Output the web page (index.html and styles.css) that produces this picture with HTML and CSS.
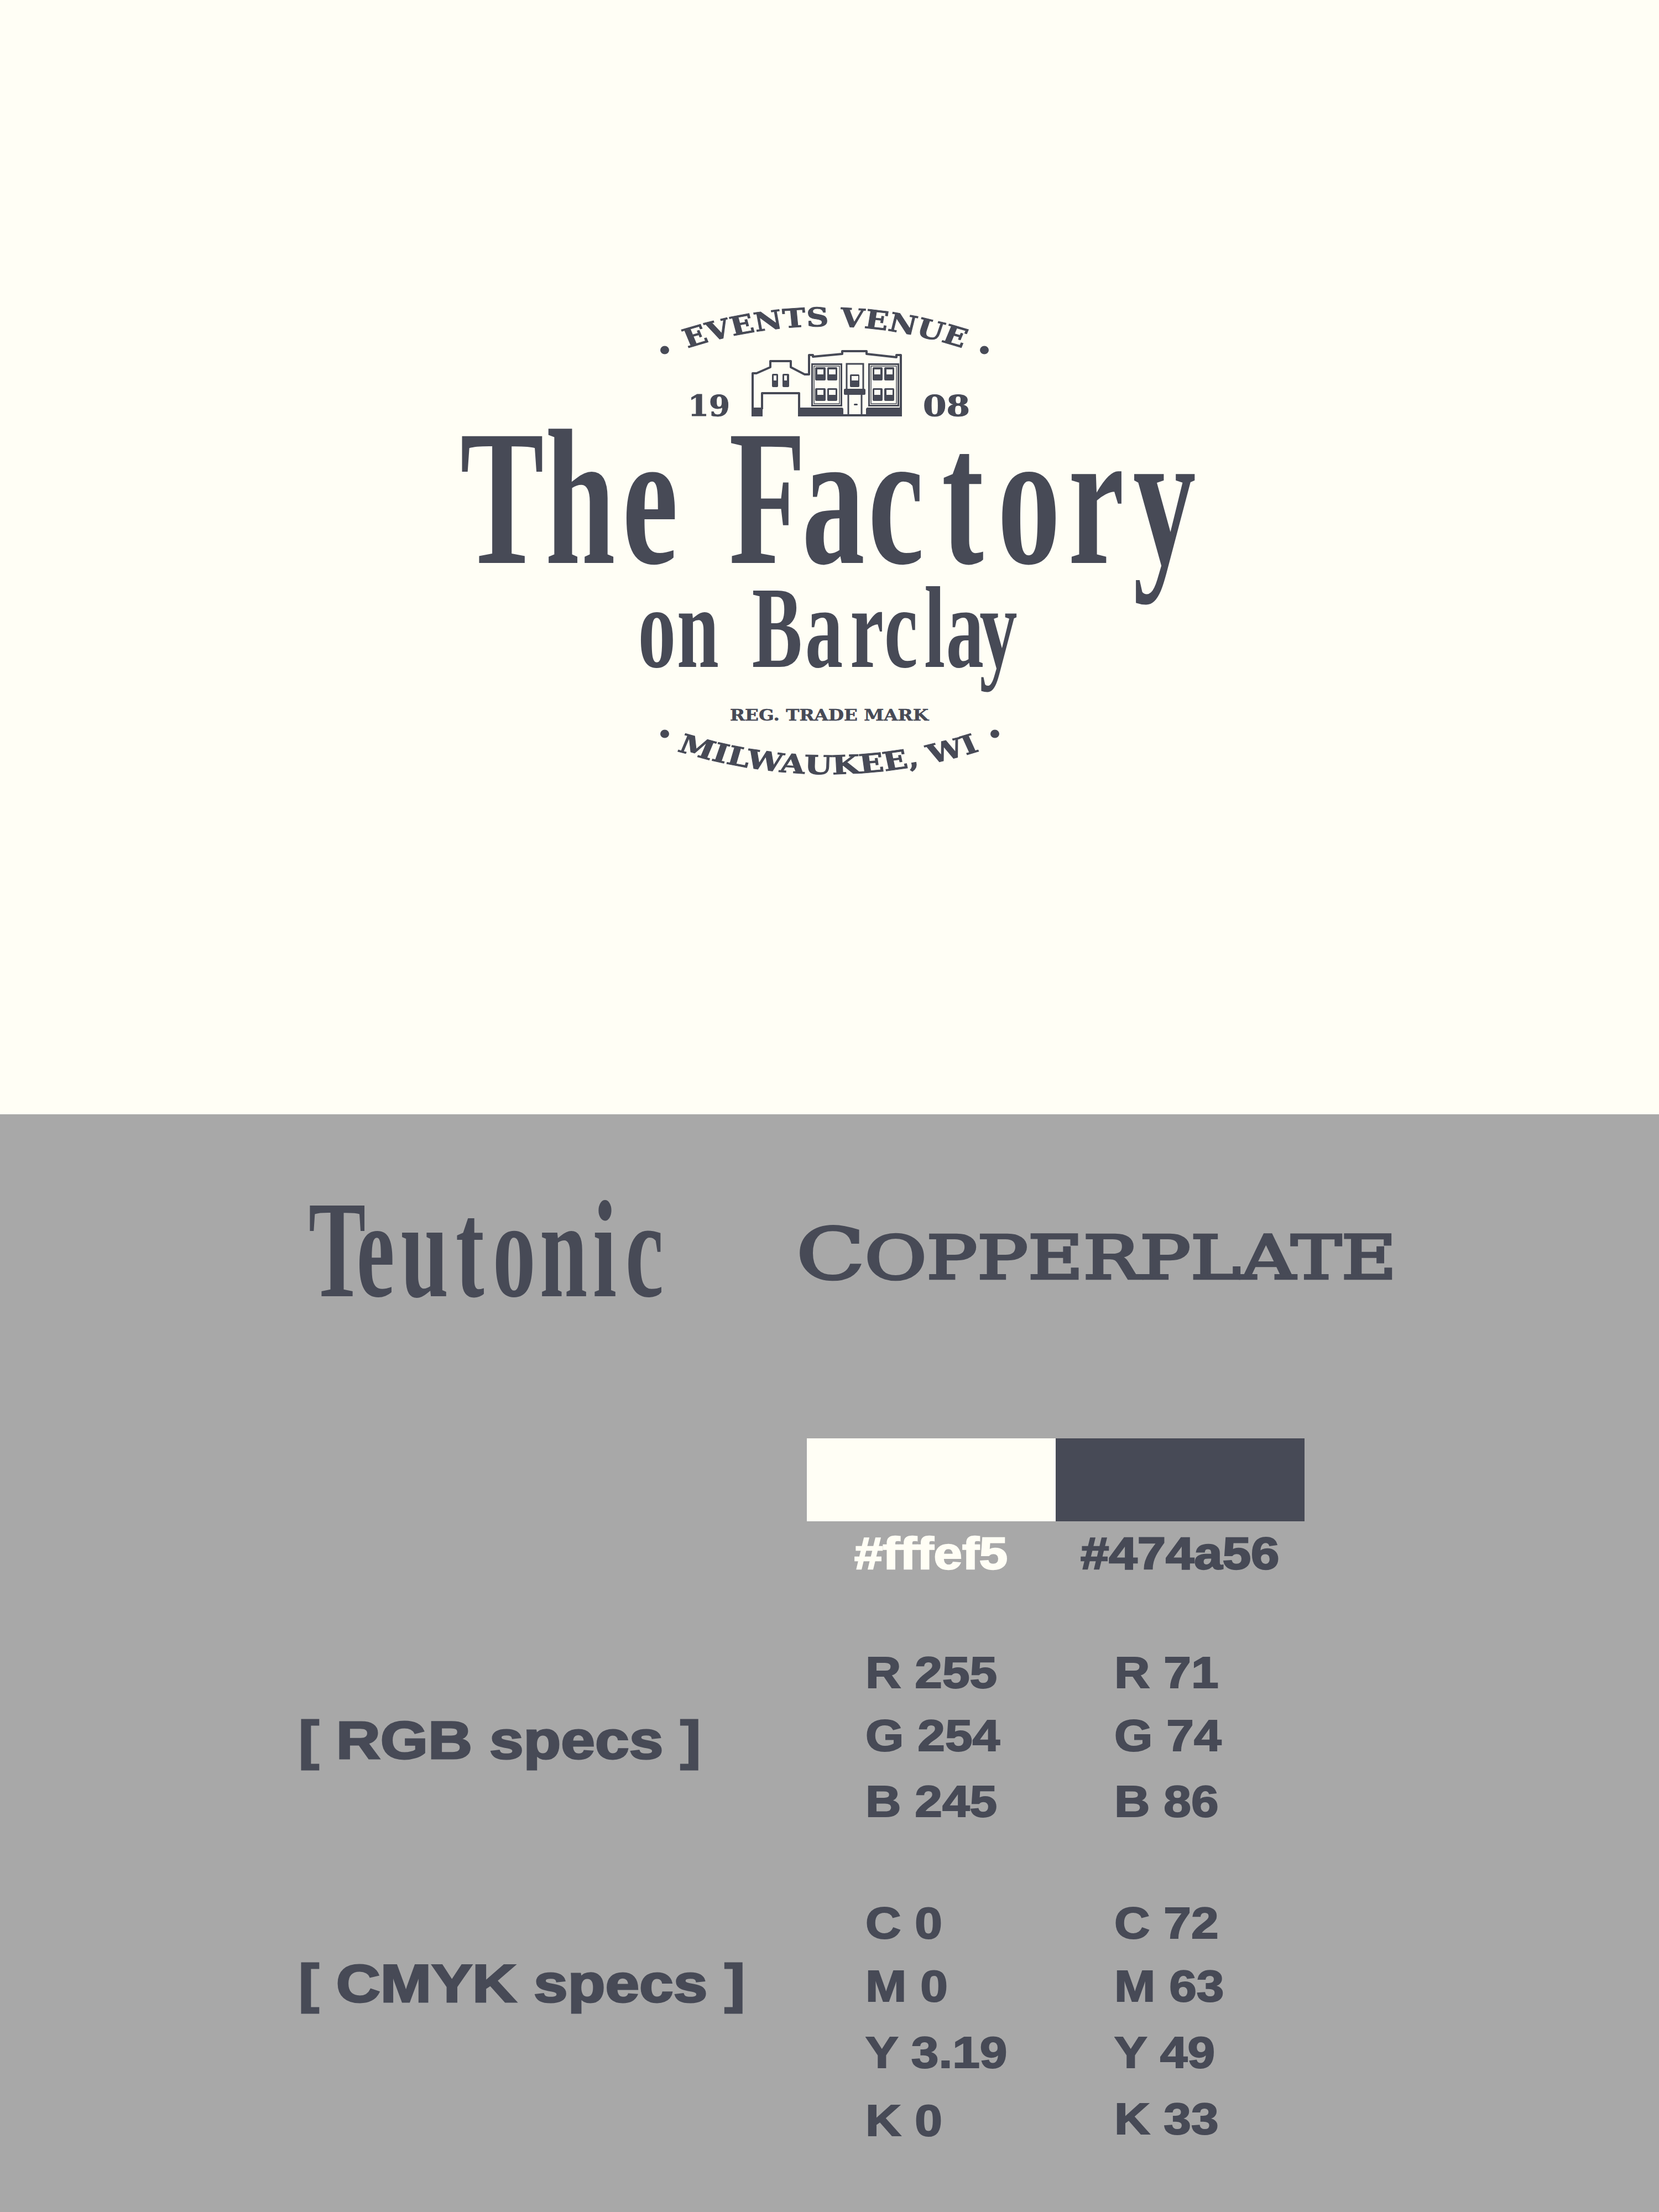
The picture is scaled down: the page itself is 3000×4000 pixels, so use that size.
FILE: index.html
```html
<!DOCTYPE html>
<html lang="en">
<head>
<meta charset="utf-8">
<title>The Factory on Barclay</title>
<link rel="stylesheet" href="styles.css">
</head>
<body>
<main class="sheet">
<section class="logo-panel">
<svg class="logo" viewBox="0 0 3000 2015" role="img" aria-label="The Factory on Barclay logo">
<defs>
<path id="arc-top" d="M-235 640Q0 540 235 640"/>
<path id="arc-bottom" d="M-240 1350Q0 1450 240 1350"/>
</defs>
<g transform="translate(1492 0) scale(1.19 1)">
<text class="cp cp-arc"><textPath href="#arc-top" startOffset="50%" text-anchor="middle">EVENTS VENUE</textPath></text>
</g>
<g transform="translate(1498 0) scale(1.245 1)">
<text class="cp cp-arc"><textPath href="#arc-bottom" startOffset="50%" text-anchor="middle">MILWAUKEE, WI</textPath></text>
</g>
<ellipse class="ink" cx="1202" cy="633" rx="8" ry="7.5"/><ellipse class="ink" cx="1780" cy="633" rx="8" ry="7.5"/>
<ellipse class="ink" cx="1202" cy="1327" rx="8" ry="7.5"/><ellipse class="ink" cx="1799" cy="1327" rx="8" ry="7.5"/>
<text class="cp cp-year" x="1244" y="752" textLength="76" lengthAdjust="spacingAndGlyphs">19</text>
<text class="cp cp-year" x="1669" y="752" textLength="85" lengthAdjust="spacingAndGlyphs">08</text>

<!-- building -->
<path class="line" d="M1361 740V675H1368L1393 664V653H1430V664L1455 677H1463V642H1470V645L1523 640V635H1567V640L1621 646V642H1629V740"/>
<path class="line" d="M1378 740V711H1445V740"/>
<path class="ink" d="M1359 737h20v16h-20zM1443 737h80l2 2v10h41v-10l2-2h63v16h-188z"/>
<rect class="ink" x="1396" y="676" width="11" height="24" rx="2"/>
<rect class="ink" x="1415" y="676" width="12" height="24" rx="2"/>
<rect class="paper" x="1399" y="679" width="5" height="9"/>
<rect class="paper" x="1418" y="679" width="5" height="9"/>
<rect class="frame" x="1468.500" y="658.500" width="53" height="75"/>
<rect class="frame" x="1571.500" y="658.500" width="53" height="75"/>
<rect class="frame-thin" x="1472" y="662" width="46" height="68"/>
<rect class="frame-thin" x="1575" y="662" width="46" height="68"/>
<rect class="ink" x="1474" y="664" width="19" height="24" rx="2"/><rect class="ink" x="1496" y="664" width="18" height="24" rx="2"/>
<rect class="ink" x="1474" y="702" width="19" height="23" rx="2"/><rect class="ink" x="1496" y="702" width="18" height="23" rx="2"/>
<rect class="ink" x="1578" y="664" width="18" height="24" rx="2"/><rect class="ink" x="1599" y="664" width="18" height="24" rx="2"/>
<rect class="ink" x="1578" y="702" width="18" height="23" rx="2"/><rect class="ink" x="1599" y="702" width="18" height="23" rx="2"/>
<rect class="paper" x="1478" y="668" width="11" height="9"/><rect class="paper" x="1499" y="668" width="12" height="9"/>
<rect class="paper" x="1478" y="705" width="11" height="9"/><rect class="paper" x="1499" y="705" width="12" height="9"/>
<rect class="paper" x="1581" y="668" width="11" height="9"/><rect class="paper" x="1603" y="668" width="11" height="9"/>
<rect class="paper" x="1581" y="705" width="11" height="9"/><rect class="paper" x="1603" y="705" width="11" height="9"/>
<path class="frame" d="M1531 704V658H1561V704"/>
<rect class="ink" x="1537" y="677" width="17" height="23" rx="2"/>
<rect class="paper" x="1540" y="680" width="12" height="8"/>
<rect class="ink" x="1526" y="703" width="39" height="11" rx="2"/>
<path class="frame" d="M1534 714V751M1558 714V751"/>
<rect class="ink" x="1544" y="730" width="7" height="3" rx="1.500"/>

<text class="tf tf-main" transform="translate(0 1018) scale(.65 1)" x="1280 1517 1731 1950 2028 2231 2415 2620 2775 2972 3152">The Factory</text>
<text class="tf tf-sub" transform="translate(0 1206) scale(.65 1)" x="1775 1883 1994 2092 2240 2365 2460 2571 2632 2725">on Barclay</text>
<text class="cp cp-mark" x="1320" y="1303" textLength="359" lengthAdjust="spacingAndGlyphs">REG. TRADE MARK</text>
</svg>
</section>

<section class="spec-panel">
<div class="specimens">
<svg class="specimen specimen-teutonic" viewBox="0 0 680 230" role="img" aria-label="Teutonic">
<text class="tf tf-spec" transform="translate(0 179) scale(.62 1)" x="21 161 290 450 558 695 850 945">Teutonic</text>
</svg>
<svg class="specimen specimen-copper" viewBox="0 0 1080 230" role="img" aria-label="Copperplate">
<text class="copper" transform="translate(0 147) scale(1.263 1)" x="0"><tspan class="copper-big">C</tspan>OPPERPLATE</text>
</svg>
</div>

<div class="swatch-row">
<div class="swatch swatch-light"></div>
<div class="swatch swatch-dark"></div>
</div>
<div class="hex-row">
<div class="hex hex-light"><span>#fffef5</span></div>
<div class="hex hex-dark"><span>#474a56</span></div>
</div>

<div class="spec-group spec-rgb">
<div class="spec-label label-rgb"><span>[ RGB specs ]</span></div>
<div class="spec-col">
<div class="val gap-14"><span>R 255</span></div>
<div class="val gap-19"><span>G 254</span></div>
<div class="val"><span>B 245</span></div>
</div>
<div class="spec-col">
<div class="val gap-14"><span>R 71</span></div>
<div class="val gap-19"><span>G 74</span></div>
<div class="val"><span>B 86</span></div>
</div>
</div>

<div class="spec-group spec-cmyk">
<div class="spec-label label-cmyk"><span>[ CMYK specs ]</span></div>
<div class="spec-col">
<div class="val gap-14"><span>C 0</span></div>
<div class="val gap-20"><span>M 0</span></div>
<div class="val gap-23"><span>Y 3.19</span></div>
<div class="val"><span>K 0</span></div>
</div>
<div class="spec-col">
<div class="val gap-14"><span>C 72</span></div>
<div class="val gap-20"><span>M 63</span></div>
<div class="val gap-20"><span>Y 49</span></div>
<div class="val"><span>K 33</span></div>
</div>
</div>
</section>
</main>
</body>
</html>
```
FILE: styles.css
```css
html,body{margin:0;padding:0}
body{background:#fffef5}
.sheet{width:3000px;height:4000px;overflow:hidden}
.logo-panel{height:2015px;background:#fffef5}
.logo{display:block;width:3000px;height:2015px}
.ink{fill:#474a56}
.paper{fill:#fffef5}
.line{fill:none;stroke:#474a56;stroke-width:4;stroke-linejoin:round}
.frame{fill:none;stroke:#474a56;stroke-width:3}
.frame-thin{fill:none;stroke:#474a56;stroke-width:1.500}
.tf{font-family:"Liberation Serif",serif;font-weight:700;fill:#474a56}
.tf-main{font-size:350px}
.tf-sub{font-size:210px}
.tf-spec{font-size:250px}
.cp{font-family:"DejaVu Serif",serif;font-weight:700;fill:#474a56;stroke:#474a56;stroke-width:1}
.cp-arc{font-size:47px}
.cp-year{font-size:52px}
.cp-mark{font-size:27px;stroke-width:.5px}

.spec-panel{height:1985px;box-sizing:border-box;padding-top:150px;background:#a8a8a8;font-family:"Liberation Sans",Arial,sans-serif;font-weight:700;color:#474a56}
.specimens{display:flex;height:436px;padding-left:545px}
.specimen{display:block;height:230px;overflow:visible}
.specimen-teutonic{width:680px}
.specimen-copper{width:1080px;margin-left:215px}
.copper{font-family:"DejaVu Serif",serif;font-weight:400;font-size:108px;fill:#474a56;stroke:#474a56;stroke-width:4.500}
.copper-big{font-size:128px}

.swatch-row{display:flex;padding-left:1459px}
.swatch{width:450px;height:150px}
.swatch-light{background:#fffef5}
.swatch-dark{background:#474a56}

.hex-row{display:flex;padding-left:1459px;margin-top:8px}
.hex{width:450px;font-size:81px;line-height:100px;text-align:center}
.hex span{display:inline-block;transform:scaleX(1.14);-webkit-text-stroke:2.500px currentColor}
.hex-light{color:#fffef5}
.hex-dark{color:#474a56}

.spec-group{display:grid;grid-template-columns:919px 450px 450px;padding-left:540px}
.spec-rgb{margin-top:116px}
.spec-cmyk{margin-top:120px}
.spec-label{font-size:96px;line-height:120px;white-space:nowrap}
.spec-label span{display:inline-block;transform:scaleX(1.155);transform-origin:left center;-webkit-text-stroke:3px currentColor}
.label-rgb{margin-top:112px}
.label-cmyk{margin-top:99px}
.spec-col{padding-left:106px}
.val{font-size:79px;line-height:100px;white-space:nowrap}
.val span{display:inline-block;transform:scaleX(1.13);transform-origin:left center;-webkit-text-stroke:2px currentColor}
.gap-14{margin-bottom:14px}
.gap-19{margin-bottom:19px}
.gap-20{margin-bottom:20px}
.gap-23{margin-bottom:23px}
```
